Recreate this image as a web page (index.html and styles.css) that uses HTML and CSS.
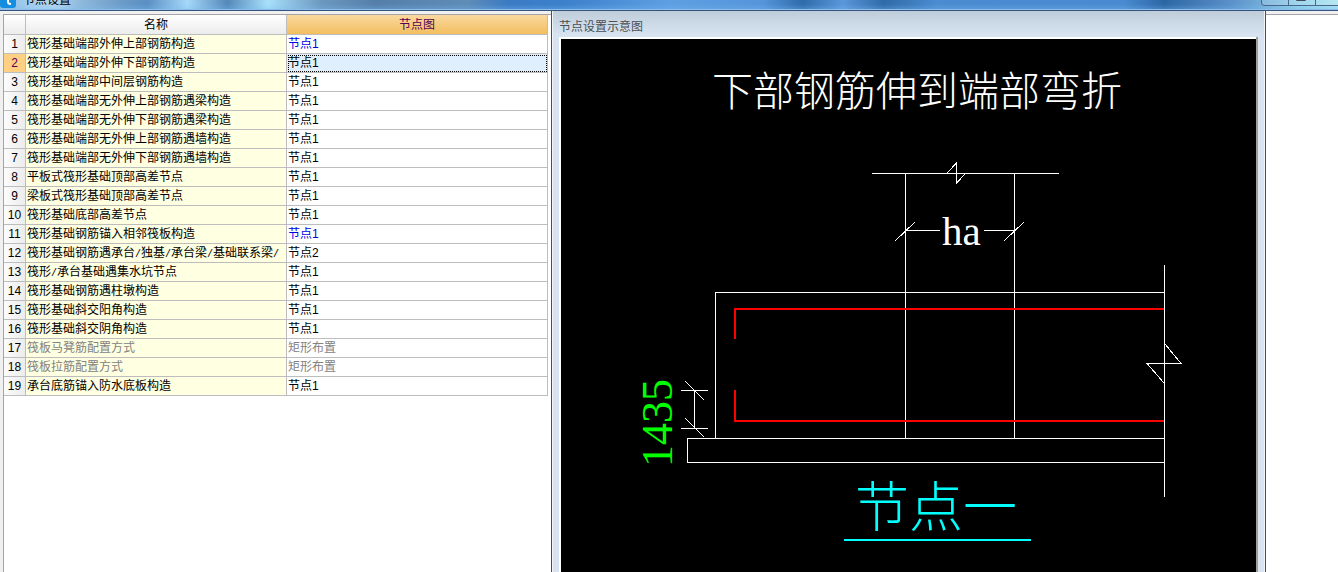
FILE: index.html
```html
<!DOCTYPE html>
<html lang="zh-CN">
<head>
<meta charset="utf-8">
<title>节点设置</title>
<link rel="stylesheet" href="styles.css">
</head>
<body>
<header class="titlebar">
  <svg class="app-icon" width="16" height="16" viewBox="0 0 16 16" aria-hidden="true"><rect width="16" height="16" rx="3" fill="#168ee0"/><path d="M3 7H12M8 4V10Q8 12 11 12" fill="none" stroke="#fff" stroke-width="2"/></svg>
  <span class="title">节点设置</span>
  <div class="window-buttons">
    <button class="win-btn" aria-label="最小化"><svg width="12" height="10" viewBox="0 0 12 10"><rect x=".5" y="3.5" width="11" height="5" fill="#eee" stroke="#444b5a"/></svg></button>
    <button class="win-btn" aria-label="最大化"><svg width="12" height="10" viewBox="0 0 12 10"><path d="M.5 0V9.500H9.500V7.500H11.500V0" fill="#eee" stroke="#444b5a"/></svg></button>
    <button class="win-btn win-close" aria-label="关闭"><svg width="16" height="10" viewBox="0 0 16 10"><path d="M.5 8.500H6L8 6L10 8.500H15.500L12 0H4Z" fill="#eee" stroke="#444b5a"/></svg></button>
  </div>
</header>
<main class="workspace">
  <section class="list-pane">
    <table class="grid">
      <colgroup><col class="col-no"><col class="col-name"><col class="col-node"></colgroup>
      <thead><tr><th></th><th>名称</th><th class="active">节点图</th></tr></thead>
      <tbody>
        <tr><th>1</th><td>筏形基础端部外伸上部钢筋构造</td><td class="changed">节点1</td></tr>
        <tr class="selected"><th>2</th><td>筏形基础端部外伸下部钢筋构造</td><td>节点1</td></tr>
        <tr><th>3</th><td>筏形基础端部中间层钢筋构造</td><td>节点1</td></tr>
        <tr><th>4</th><td>筏形基础端部无外伸上部钢筋遇梁构造</td><td>节点1</td></tr>
        <tr><th>5</th><td>筏形基础端部无外伸下部钢筋遇梁构造</td><td>节点1</td></tr>
        <tr><th>6</th><td>筏形基础端部无外伸上部钢筋遇墙构造</td><td>节点1</td></tr>
        <tr><th>7</th><td>筏形基础端部无外伸下部钢筋遇墙构造</td><td>节点1</td></tr>
        <tr><th>8</th><td>平板式筏形基础顶部高差节点</td><td>节点1</td></tr>
        <tr><th>9</th><td>梁板式筏形基础顶部高差节点</td><td>节点1</td></tr>
        <tr><th>10</th><td>筏形基础底部高差节点</td><td>节点1</td></tr>
        <tr><th>11</th><td>筏形基础钢筋锚入相邻筏板构造</td><td class="changed">节点1</td></tr>
        <tr><th>12</th><td>筏形基础钢筋遇承台<span class="slash">/</span>独基<span class="slash">/</span>承台梁<span class="slash">/</span>基础联系梁<span class="slash">/</span></td><td>节点2</td></tr>
        <tr><th>13</th><td>筏形<span class="slash">/</span>承台基础遇集水坑节点</td><td>节点1</td></tr>
        <tr><th>14</th><td>筏形基础钢筋遇柱墩构造</td><td>节点1</td></tr>
        <tr><th>15</th><td>筏形基础斜交阳角构造</td><td>节点1</td></tr>
        <tr><th>16</th><td>筏形基础斜交阴角构造</td><td>节点1</td></tr>
        <tr class="disabled"><th>17</th><td>筏板马凳筋配置方式</td><td>矩形布置</td></tr>
        <tr class="disabled"><th>18</th><td>筏板拉筋配置方式</td><td>矩形布置</td></tr>
        <tr><th>19</th><td>承台底筋锚入防水底板构造</td><td>节点1</td></tr>
      </tbody>
    </table>
  </section>
  <section class="preview">
    <h2 class="preview-title">节点设置示意图</h2>
    <div class="canvas">
      <svg class="drawing" viewBox="561 39 695 533" role="img" aria-label="节点设置示意图">
        <g class="thin">
          <path d="M872 173.500H1059M905.500 173V438M1014.500 173V438"/>
          <path d="M947 173L956.500 163V183L966 173"/>
          <path d="M905 230.500H940M984 230.500H1014M895 241L915 222M1004 241L1024 222"/>
          <path d="M1164 292.500H715.500V438M1164.500 265V497"/>
          <path d="M1164 438.500H687.500V462.500H1164"/>
          <path d="M1165 344L1181 363.500H1147L1164 383"/>
          <path d="M681 390.500H708M681 428.500H708M694.500 390V428M685 381L704 400M685 418L704 437"/>
        </g>
        <path class="rebar" d="M1164 309H735V339M735 390V421H1164"/>
        <text class="caption" x="712" y="106">下部钢筋伸到端部弯折</text>
        <text class="dimension" x="942" y="245">ha</text>
        <text class="elevation" transform="translate(672 467) rotate(-90)">1435</text>
        <text class="name" x="855" y="527">节点一</text>
        <path class="underline" d="M844 540H1031"/>
      </svg>
    </div>
  </section>
  <aside class="side"></aside>
</main>
</body>
</html>
```
FILE: styles.css
```css
* { box-sizing: border-box; }
body {
  margin: 0;
  min-height: 100vh;
  display: flex;
  flex-direction: column;
  overflow: hidden;
  background: #fff;
  color: #000;
  font: 12px/18px "Liberation Sans", "Noto Sans CJK SC", sans-serif;
}
.titlebar {
  height: 11px;
  display: flex;
  align-items: flex-end;
  gap: 7px;
  overflow: hidden;
  border-bottom: 1px solid #34557f;
  box-shadow: inset 0 -1px #8fbbe8;
  background:
    linear-gradient(rgba(0, 0, 0, 0) 40%, rgba(120, 190, 245, .35)),
    linear-gradient(90deg, #8fbfe6 0, #b4d6f0 4%, #8fb9dc 6%, #6d9cc8 9%, #5b8fc4 11%, #a5d8f8 14%, #5588ba 17%, #a8e0fa 20%, #6c98c0 24%, #557fa9 28%, #5f8cb8 35%, #3b7ac4 38%, #3c80cb 42%, #5e9fe2 50%, #5795da 57%, #2e6bab 60%, #5a96da 63%, #2f6aa8 66%, #4b8bd0 70%, #4a8ad0 84%, #2c66a5 87%, #5b90c8 92%, #8fd0ea 97%, #a9e3ef 100%);
}
.app-icon { flex: none; margin-bottom: 2px; }
.title { line-height: 14px; margin-bottom: 3px; }
.window-buttons {
  display: flex;
  height: 16px;
  margin: 0 0 4px auto;
  border: 1px solid #49668d;
  border-width: 0 0 1px 1px;
  border-radius: 0 0 0 4px;
}
.win-btn {
  width: 27px;
  padding: 0 0 4px;
  display: flex;
  align-items: flex-end;
  justify-content: center;
  border: 0;
  border-right: 1px solid #49668d;
  background: rgba(255, 255, 255, .15);
}
.win-close { width: 22px; border-right: 0; padding-left: 18px; }
.workspace { flex: 1; display: flex; }
.list-pane {
  flex: none;
  width: 551px;
  padding: 1px 0 0 1px;
  border: solid #f0f0f0;
  border-width: 3px 0 0 3px;
  box-shadow: inset 1px 1px #a5a5a5;
}
.grid {
  width: 544px;
  table-layout: fixed;
  border-collapse: separate;
  border-spacing: 0;
}
.col-no { width: 22px; }
.col-name { width: 261px; }
.grid th, .grid td {
  height: 19px;
  padding: 1px 0 0 1px;
  border: solid #bdbdbd;
  border-width: 0 1px 1px 0;
  line-height: 17px;
  white-space: nowrap;
  overflow: hidden;
  text-align: left;
  font-weight: 400;
}
.grid th {
  padding: 1px 0 0;
  text-align: center;
  background: linear-gradient(#fff, #ececec);
}
.grid thead th { height: 20px; }
.grid thead .active {
  color: #550055;
  background: linear-gradient(#fad8a0, #f3be5e);
}
.grid tbody th { background: linear-gradient(90deg, #fcfcfc, #ececec); }
.grid td:nth-child(2) { background: #ffffe1; }
.grid .changed { color: #0000e8; }
.grid .selected th { color: #550055; background: #ffd084; }
.grid .selected td:last-child {
  background: #dfeffe;
  outline: 1px dotted #000;
  outline-offset: -2px;
}
.grid .disabled td { color: #828282; }
.slash {
  font-family: "Liberation Mono", monospace;
  font-size: 10px;
  line-height: 1;
}
.preview {
  flex: 1;
  min-width: 0;
  padding: 0 7px;
  display: flex;
  flex-direction: column;
  border: solid #4d4d55;
  border-width: 0 1px;
  box-shadow: inset 1px 0 #f0f5fa, inset -1px 0 #f0f5fa;
  background: linear-gradient(#bfcddb, #d7e3f0 24px);
}
.preview-title {
  margin: 0;
  padding: 7px 0 1px;
  font-size: 12px;
  font-weight: 400;
  line-height: 18px;
  color: #4a5056;
}
.canvas {
  flex: 1;
  background: #000;
  border: solid #fff;
  border-width: 2px 0 0 2px;
  box-shadow: 2px 0 #a09d98;
  margin-right: 2px;
}
.drawing { display: block; width: 100%; }
.thin { fill: none; stroke: #fff; stroke-width: 1; shape-rendering: crispEdges; }
.rebar { fill: none; stroke: #f00; stroke-width: 2; }
.underline { stroke: #0ff; stroke-width: 2; }
.drawing text {
  fill: #fff;
  font-family: "Liberation Serif", "Noto Sans CJK SC", serif;
}
.drawing .caption { font-size: 41px; font-weight: 300; }
.drawing .dimension { font-size: 41px; }
.drawing .elevation { font-size: 44px; fill: #0f0; }
.drawing .name { font-size: 54px; font-weight: 300; fill: #0ff; }
.side {
  flex: none;
  width: 72px;
  border-top: 3px solid #f0f0f0;
  box-shadow: inset 0 1px #a5a5a5;
}
```
